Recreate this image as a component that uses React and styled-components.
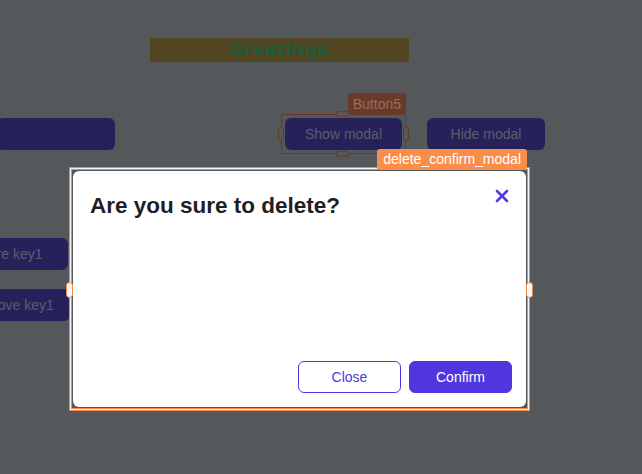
import React from 'react'
import styled, { createGlobalStyle } from 'styled-components';

const GlobalStyle = createGlobalStyle`
  html, body {
    margin: 0;
    padding: 0;
    background: #54585b;
    font-family: "Liberation Sans", Arial, sans-serif;
  }
  #root {
    width: 642px;
    height: 474px;
    overflow: hidden;
  }
`

// widgets on the builder canvas, placed where the user dropped them
const canvasButtons = [
  { label: '', left: -3, top: 118, width: 118 },
  { label: 'Hide modal', left: 427, top: 118, width: 118 },
  { label: 'Store key1', left: -50, top: 238, width: 118 },
  { label: 'Remove key1', left: -48, top: 289, width: 118 },
]

const App = () => {
  return (
    <Canvas>
      <GlobalStyle />
      <Greeting>Greetings</Greeting>

      {canvasButtons.map((b, i) => (
        <CanvasButton key={i} style={{ left: b.left, top: b.top, width: b.width }}>
          {b.label}
        </CanvasButton>
      ))}

      <Selected>
        <SelectedTag>Button5</SelectedTag>
        <DimHandle $pos="top" />
        <DimHandle $pos="bottom" />
        <DimHandle $pos="left" />
        <DimHandle $pos="right" />
        <SelectedButton>Show modal</SelectedButton>
      </Selected>

      <ModalFrame>
        <ModalTag>delete_confirm_modal</ModalTag>
        <Handle $side="left" />
        <Handle $side="right" />
        <Modal>
          <Header>
            <Title>Are you sure to delete?</Title>
            <CloseIcon viewBox="0 0 14 14">
              <path d="M2 2 L12 12 M12 2 L2 12" stroke="#5439e0" strokeWidth="2.6" strokeLinecap="round" />
            </CloseIcon>
          </Header>
          <Body />
          <Footer>
            <Button $variant="outline">Close</Button>
            <Button>Confirm</Button>
          </Footer>
        </Modal>
      </ModalFrame>
    </Canvas>
  )
}

export default App;

const Canvas = styled.div`
position: relative;
width: 642px;
height: 474px;
background: #54585b;
overflow: hidden;
`

const Greeting = styled.div`
position: absolute;
left: 150px;
top: 38px;
width: 259px;
height: 24px;
background: #524521;
color: #1d5a39;
font-family: "DejaVu Sans", sans-serif;
font-weight: 700;
font-size: 18px;
line-height: 24px;
text-align: center;
`

const CanvasButton = styled.div`
position: absolute;
height: 32px;
background: #26215a;
border-radius: 6px;
color: #5b5e6d;
font-size: 14px;
display: flex;
align-items: center;
justify-content: center;
white-space: nowrap;
`

const Selected = styled.div`
position: absolute;
left: 281px;
top: 114px;
width: 123px;
height: 38px;
border: 1px solid #6a3a28;
display: flex;
align-items: center;
justify-content: center;
`

const SelectedTag = styled.div`
position: absolute;
right: -1px;
top: -22px;
height: 22px;
padding: 0 5px;
background: #6a3a28;
color: #93705f;
font-size: 14px;
line-height: 22px;
border-radius: 3px 3px 0 0;
`

const DimHandle = styled.div`
position: absolute;
background: #54585b;
border: 1px solid #6a3a28;
border-radius: 4px;
box-sizing: border-box;
z-index: 2;
${p => (p.$pos === 'top' || p.$pos === 'bottom') ? `
  width: 14px; height: 6px; left: 54px;
  ${p.$pos === 'top' ? 'top: -4px;' : 'bottom: -4px;'}
` : `
  width: 6px; height: 15px; top: 11px;
  ${p.$pos === 'left' ? 'left: -4px;' : 'right: -4px;'}
`}
`

const SelectedButton = styled(CanvasButton)`
position: static;
width: 117px;
`

const ModalFrame = styled.div`
position: absolute;
left: 69px;
top: 167px;
width: 453px;
height: 236px;
border: 1px solid #f28a48;
box-shadow: inset 0 0 0 1px #f4f4f4, inset 0 0 0 2px #f28a48;
padding: 3px;
box-sizing: content-box;
display: flex;
`

const ModalTag = styled.div`
position: absolute;
right: 2px;
top: -19px;
height: 20px;
padding: 0 6px;
background: #fb8d4b;
color: #fff;
font-size: 14px;
line-height: 20px;
border-radius: 3px 3px 0 0;
`

const Handle = styled.div`
position: absolute;
top: 114px;
${p => p.$side === 'left' ? 'left: -4px;' : 'right: -4px;'}
width: 7px;
height: 16px;
background: #f8f8f8;
border: 1px solid #f28a48;
border-radius: 4px;
box-sizing: border-box;
z-index: 2;
`

const Modal = styled.div`
flex: 1;
background: #fff;
border-radius: 6px;
display: flex;
flex-direction: column;
`

const Header = styled.div`
display: flex;
justify-content: space-between;
align-items: flex-start;
padding: 21px 17px 0 17px;
`

const Title = styled.h2`
margin: 0;
font-size: 22.5px;
line-height: 27px;
font-weight: 700;
color: #1e1e24;
`

const CloseIcon = styled.svg`
width: 14px;
height: 14px;
margin-top: -3px;
`

const Body = styled.div`
flex: 1;
`

const Footer = styled.div`
display: flex;
justify-content: flex-end;
gap: 8px;
padding: 0 14px 14px 0;
`

const Button = styled.button`
width: 103px;
height: 32px;
border-radius: 6px;
font-family: "Liberation Sans", Arial, sans-serif;
font-size: 14px;
cursor: pointer;
border: 1px solid #5136e0;
background: ${p => p.$variant === 'outline' ? '#fff' : '#5136e0'};
color: ${p => p.$variant === 'outline' ? '#5136e0' : '#fff'};
`
